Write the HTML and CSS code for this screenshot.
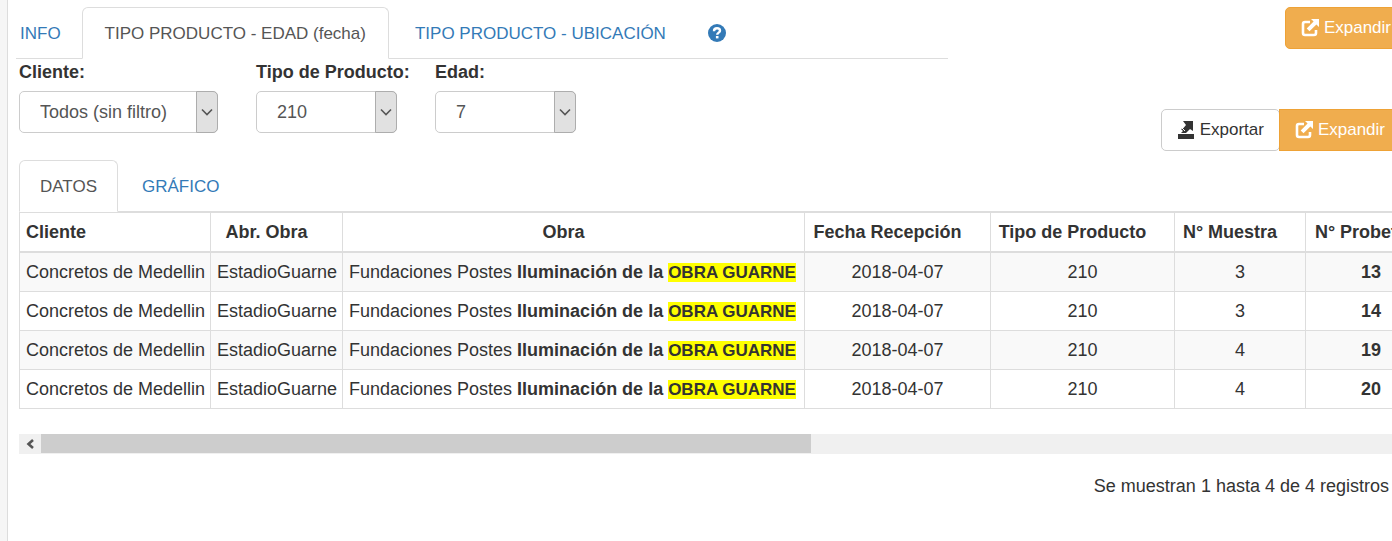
FILE: index.html
```html
<!DOCTYPE html>
<html lang="es">
<head>
    <meta charset="UTF-8">
    <meta name="viewport" content="width=device-width, initial-scale=1.0">
    <title>Tipo producto - Edad</title>
    <link rel="stylesheet" href="styles.css">
</head>
<body>
    <!-- Iconos compartidos -->
    <svg class="sprite" aria-hidden="true">
        <symbol id="icon-expand" viewBox="0 0 18 18">
            <path d="M9 3H4Q2 3 2 5v9q0 2 2 2h9q2 0 2-2v-3" fill="none" stroke="currentColor" stroke-width="2.600"/>
            <path d="M10 0h8v8l-2.600-2.600-6.900 6.900-2.800-2.800 6.900-6.900z" fill="currentColor"/>
        </symbol>
    </svg>

    <main class="panel">
        <div class="top-bar">
            <nav class="tabs tabs-main">
                <a class="tab" href="#info">INFO</a>
                <a class="tab active" href="#edad">TIPO PRODUCTO - EDAD (fecha)</a>
                <a class="tab" href="#ubicacion">TIPO PRODUCTO - UBICACIÓN</a>
                <a class="tab" href="#ayuda" aria-label="Ayuda">
                    <svg class="icon-help" viewBox="0 0 18 18">
                        <circle cx="9" cy="9" r="9" fill="currentColor"/>
                        <path d="M6 7.200C6 5.200 7.200 4.200 9 4.200s3 1 3 2.500C12 8.700 9.200 8.600 9.200 10.800" fill="none" stroke="#fff" stroke-width="2.400"/>
                        <rect x="7.900" y="12" width="2.600" height="2.400" fill="#fff"/>
                    </svg>
                </a>
            </nav>
            <button type="button" class="btn btn-warning"><svg class="icon"><use href="#icon-expand"/></svg>Expandir</button>
        </div>

        <div class="toolbar">
            <form class="filters">
                <div class="field field-wide">
                    <label for="cliente">Cliente:</label>
                    <div class="select">
                        <select id="cliente"><option>Todos (sin filtro)</option></select>
                        <span class="arrow"><svg viewBox="0 0 12 8"><path d="M1 1.500l5 5 5-5" fill="none" stroke="#555" stroke-width="1.600"/></svg></span>
                    </div>
                </div>
                <div class="field">
                    <label for="tipo">Tipo de Producto:</label>
                    <div class="select">
                        <select id="tipo"><option>210</option></select>
                        <span class="arrow"><svg viewBox="0 0 12 8"><path d="M1 1.500l5 5 5-5" fill="none" stroke="#555" stroke-width="1.600"/></svg></span>
                    </div>
                </div>
                <div class="field">
                    <label for="edad">Edad:</label>
                    <div class="select">
                        <select id="edad"><option>7</option></select>
                        <span class="arrow"><svg viewBox="0 0 12 8"><path d="M1 1.500l5 5 5-5" fill="none" stroke="#555" stroke-width="1.600"/></svg></span>
                    </div>
                </div>
            </form>
            <div class="btn-group">
                <button type="button" class="btn btn-default"><svg class="icon" viewBox="0 0 18 18"><path d="M1 13h16v5H1zM6 0h10v10l-3-2-4 4H4l2-2-2-2 2.500-1L9 4z" fill="currentColor"/><path d="M5 7l3 3" stroke="#fff" stroke-width="1"/></svg>Exportar</button>
                <button type="button" class="btn btn-warning"><svg class="icon"><use href="#icon-expand"/></svg>Expandir</button>
            </div>
        </div>

        <section class="results">
            <nav class="tabs">
                <a class="tab active" href="#datos">DATOS</a>
                <a class="tab" href="#grafico">GRÁFICO</a>
            </nav>
            <div class="table-wrap">
                <table>
                    <colgroup>
                        <col class="c-cliente"><col class="c-abr"><col class="c-obra"><col class="c-fecha"><col class="c-tipo"><col class="c-num"><col class="c-num">
                    </colgroup>
                    <thead>
                        <tr>
                            <th class="left">Cliente</th>
                            <th>Abr. Obra</th>
                            <th>Obra</th>
                            <th>Fecha Recepción</th>
                            <th>Tipo de Producto</th>
                            <th>N° Muestra</th>
                            <th>N° Probeta</th>
                        </tr>
                    </thead>
                    <tbody>
                        <tr>
                            <td class="left">Concretos de Medellin</td>
                            <td>EstadioGuarne</td>
                            <td class="left">Fundaciones Postes <b>Iluminación de la <mark>OBRA GUARNE</mark></b></td>
                            <td>2018-04-07</td>
                            <td>210</td>
                            <td>3</td>
                            <td><b>13</b></td>
                        </tr>
                        <tr>
                            <td class="left">Concretos de Medellin</td>
                            <td>EstadioGuarne</td>
                            <td class="left">Fundaciones Postes <b>Iluminación de la <mark>OBRA GUARNE</mark></b></td>
                            <td>2018-04-07</td>
                            <td>210</td>
                            <td>3</td>
                            <td><b>14</b></td>
                        </tr>
                        <tr>
                            <td class="left">Concretos de Medellin</td>
                            <td>EstadioGuarne</td>
                            <td class="left">Fundaciones Postes <b>Iluminación de la <mark>OBRA GUARNE</mark></b></td>
                            <td>2018-04-07</td>
                            <td>210</td>
                            <td>4</td>
                            <td><b>19</b></td>
                        </tr>
                        <tr>
                            <td class="left">Concretos de Medellin</td>
                            <td>EstadioGuarne</td>
                            <td class="left">Fundaciones Postes <b>Iluminación de la <mark>OBRA GUARNE</mark></b></td>
                            <td>2018-04-07</td>
                            <td>210</td>
                            <td>4</td>
                            <td><b>20</b></td>
                        </tr>
                    </tbody>
                </table>
            </div>
            <div class="scrollbar">
                <button type="button" class="scroll-left" aria-label="Desplazar a la izquierda"><svg viewBox="0 0 8 10"><path d="M7 1L2.500 5 7 9" fill="none" stroke="#555" stroke-width="2.600"/></svg></button>
                <div class="thumb"></div>
            </div>
            <p class="summary">Se muestran 1 hasta 4 de 4 registros</p>
        </section>
    </main>
</body>
</html>
```

FILE: styles.css
```css
* {
    box-sizing: border-box;
}

body {
    margin: 0;
    padding-left: 7px;
    background-color: #f6f6f6;
    color: #333;
    font-family: "Liberation Sans", Arial, sans-serif;
    font-size: 18px;
    line-height: 26px;
    overflow: hidden;
}

a {
    color: #337ab7;
    text-decoration: none;
}

/* El panel es mas ancho que la ventana */
.panel {
    min-height: 100vh;
    margin-right: -15px;
    padding: 7px 0 0 8px;
    border-left: 1px solid #ddd;
    background-color: #fff;
}

.sprite {
    position: absolute;
    width: 0;
    height: 0;
}

.top-bar {
    display: flex;
    justify-content: space-between;
    align-items: flex-start;
}

/* Pestañas */
.tabs {
    display: flex;
    gap: 3px;
    border-bottom: 1px solid #ddd;
    font-size: 17px;
}

.tabs-main {
    width: 67%;
}

.tab {
    display: flex;
    align-items: center;
    height: 52px;
    margin-bottom: -1px;
    padding: 2px 20px 0;
    border: 1px solid transparent;
    border-radius: 6px 6px 0 0;
    white-space: nowrap;
}

.tabs-main .tab {
    padding: 2px 22px 0;
}

.tabs-main .tab:first-child {
    padding: 2px 17px 0 3px;
}

.tabs-main .tab:last-child {
    padding: 0 15px;
}

.tab.active {
    border-color: #ddd;
    border-bottom-color: #fff;
    background-color: #fff;
    color: #555;
}

.icon-help {
    width: 18px;
    height: 18px;
}

/* Botones */
.btn {
    display: flex;
    align-items: center;
    gap: 5px;
    height: 42px;
    padding: 0 15px;
    border: 1px solid #ccc;
    border-radius: 5px;
    background-color: #fff;
    color: #333;
    font: inherit;
    font-size: 17px;
    cursor: pointer;
}

.btn-warning {
    border-color: #eea236;
    background-color: #f0ad4e;
    color: #fff;
}

.icon {
    width: 18px;
    height: 18px;
}

.btn-group {
    display: flex;
}

.btn-group .btn-warning {
    margin-left: -1px;
    border-radius: 0;
}

/* Filtros */
.toolbar {
    display: flex;
    justify-content: space-between;
    padding-left: 3px;
}

.filters {
    display: flex;
    gap: 38px;
}

.field {
    width: 141px;
}

.field-wide {
    width: 199px;
}

.field label {
    display: block;
    height: 32px;
    font-weight: bold;
    white-space: nowrap;
}

.select {
    position: relative;
}

.select select {
    width: 100%;
    height: 42px;
    padding: 0 20px;
    border: 1px solid #ccc;
    border-radius: 5px;
    background-color: #fff;
    color: #555;
    font: inherit;
    appearance: none;
}

.arrow {
    position: absolute;
    top: 0;
    right: 0;
    display: flex;
    align-items: center;
    justify-content: center;
    width: 22px;
    height: 42px;
    border: 1px solid #adadad;
    border-radius: 0 5px 5px 0;
    background-color: #e1e1e1;
    pointer-events: none;
}

.arrow svg {
    width: 12px;
    height: 8px;
}

.toolbar .btn-group {
    margin: 50px 6px 0 0;
}

/* Tabla de datos */
.results {
    padding: 9px 0 0 3px;
}

.table-wrap {
    overflow: hidden;
}

table {
    width: 1417px;
    table-layout: fixed;
    border-collapse: collapse;
}

.c-cliente { width: 191px; }
.c-abr { width: 132px; }
.c-obra { width: 462px; }
.c-fecha { width: 186px; }
.c-tipo { width: 184px; }
.c-num { width: 131px; }

th,
td {
    padding: 6px;
    border: 1px solid #ddd;
    text-align: center;
    white-space: nowrap;
}

th {
    padding-right: 26px;
    border-bottom-width: 2px;
}

.left {
    text-align: left;
}

tbody tr:nth-child(odd) {
    background-color: #f9f9f9;
}

mark {
    background-color: #ff0;
    color: #333;
    font-size: 17px;
    line-height: 20px;
}

/* Barra de desplazamiento */
.scrollbar {
    display: flex;
    height: 20px;
    margin-top: 25px;
    background-color: #f0f0f0;
}

.scroll-left {
    display: flex;
    align-items: center;
    justify-content: center;
    width: 22px;
    padding: 0;
    border: 0;
    background-color: #f0f0f0;
}

.scroll-left svg {
    width: 8px;
    height: 10px;
}

.thumb {
    width: 55.5%;
    height: 19px;
    background-color: #cdcdcd;
}

.summary {
    margin: 19px 18px 0 0;
    text-align: right;
}
```
